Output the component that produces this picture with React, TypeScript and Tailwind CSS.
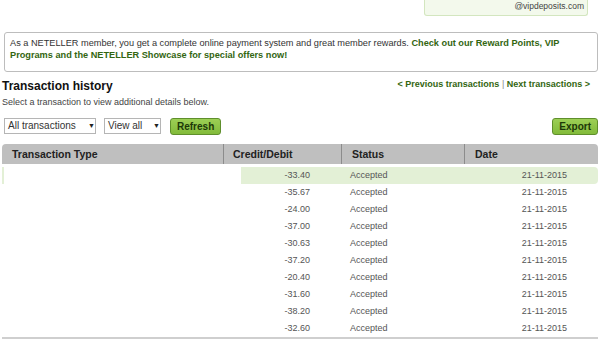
import React from 'react';

const rows = [
  '-33.40', '-35.67', '-24.00', '-37.00', '-30.63',
  '-37.20', '-20.40', '-31.60', '-38.20', '-32.60',
];

function FakeSelect({ label, width, arrowLeft }: { label: string; width: string; arrowLeft: string }) {
  return (
    <div className={`relative h-[16px] ${width} border border-[#b5b5b5] bg-white text-[10px] leading-[14px] text-[#333] pl-[3px]`}>
      {label}
      <span className={`absolute top-0 ${arrowLeft} text-[7px] leading-[14px] text-[#222]`}>▼</span>
    </div>
  );
}

function GreenButton({ children }: { children: React.ReactNode }) {
  return (
    <button className="block h-[17px] px-[6px] rounded-[3px] border border-[#5f8f2c] bg-gradient-to-b from-[#9ccf55] to-[#82bb3a] text-[10px] font-bold leading-[15px] text-[#1c3808]">
      {children}
    </button>
  );
}

export default function App() {
  return (
    <div className="w-[600px] h-[350px] overflow-hidden bg-white font-['Liberation_Sans',Arial,sans-serif] text-[#333]">
      {/* Account badge (cut off at top) */}
      <div className="flex">
        <div className="ml-[424px] w-[164px] h-[16px] border border-t-0 border-[#d3e6bf] rounded-b-[3px] bg-[#f3f9ec] flex justify-end pr-[3px] text-[8.5px] leading-[12px] text-[#444]">
          @vipdeposits.com
        </div>
      </div>

      {/* Notice */}
      <div className="mt-[16px] ml-[4px] mr-[2px] h-[40px] border border-[#bdbdbd] rounded-[3px] pl-[5px] pr-[6px] pt-[4px] text-[9.2px] leading-[12px] text-[#333]">
        As a NETELLER member, you get a complete online payment system and great member rewards.{' '}
        <span className="font-bold text-[#336611]">
          Check out our Reward Points, VIP Programs and the NETELLER Showcase for special offers now!
        </span>
      </div>

      {/* Title row */}
      <div className="mt-[6px] flex items-start justify-between pl-[2px] pr-[10px]">
        <h1 className="pt-[1px] text-[12px] font-bold leading-[14px] text-[#111]">Transaction history</h1>
        <div className="text-[9px] font-bold leading-[12px] text-[#336611]">
          &lt; Previous transactions <span className="font-normal text-[#888]">|</span> Next transactions &gt;
        </div>
      </div>
      <p className="mt-[4px] pl-[2px] text-[9px] leading-[11px] text-[#444]">
        Select a transaction to view additional details below.
      </p>

      {/* Controls */}
      <div className="mt-[10px] flex h-[17px] items-start pl-[4px] pr-[2px]">
        <FakeSelect label="All transactions" width="w-[92px]" arrowLeft="left-[83px]" />
        <div className="ml-[8px] flex">
          <FakeSelect label="View all" width="w-[57px]" arrowLeft="left-[48px]" />
        </div>
        <div className="ml-[9px] flex">
          <GreenButton>Refresh</GreenButton>
        </div>
        <div className="ml-auto flex">
          <GreenButton>Export</GreenButton>
        </div>
      </div>

      {/* Table */}
      <div className="mt-[9px] ml-[2px] w-[596px]">
        <div className="flex h-[20px] rounded-t-[4px] bg-[#bfbfbf] text-[10.5px] font-bold leading-[20px] text-[#222]">
          <div className="w-[221px] pl-[10px]">Transaction Type</div>
          <div className="w-[118px] border-l border-[#8c8c8c] pl-[9px]">Credit/Debit</div>
          <div className="w-[123px] border-l border-[#8c8c8c] pl-[10px]">Status</div>
          <div className="flex-1 border-l border-[#8c8c8c] pl-[10px]">Date</div>
        </div>

        <div className="mt-[3px]">
          {rows.map((amount, i) => (
            <div key={i} className="flex h-[17px] text-[9px] leading-[17px] text-[#555]">
              <div className="w-[239px]">
                {i === 0 && <div className="h-full w-[2px] bg-[#e3f0d6]" />}
              </div>
              <div className={`flex flex-1 rounded-r-[4px] ${i === 0 ? 'bg-[#e3f0d6]' : ''}`}>
                <span className="w-[69px] text-right">{amount}</span>
                <span className="ml-[40px]">Accepted</span>
                <span className="ml-auto pr-[31px]">21-11-2015</span>
              </div>
            </div>
          ))}
        </div>
        <div className="h-[2px] bg-[#cfcfcf]" />
      </div>
    </div>
  );
}
